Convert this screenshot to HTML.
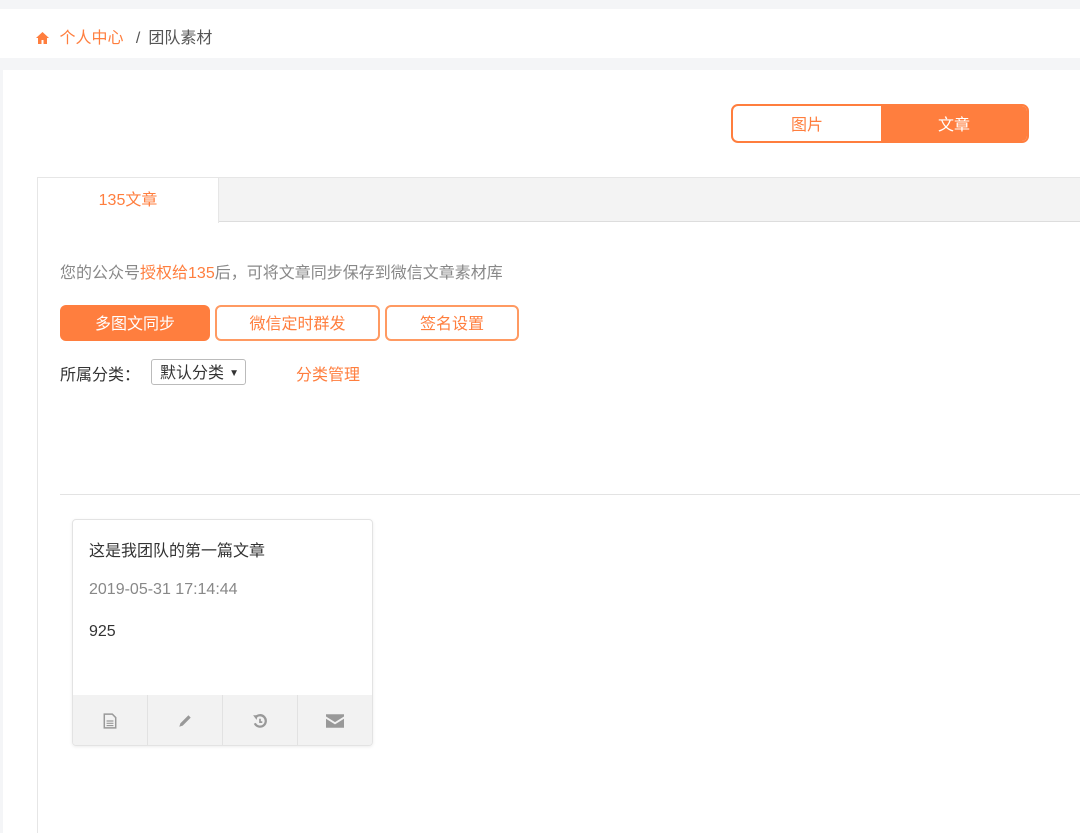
<!DOCTYPE html>
<html><head><meta charset="utf-8"><style>
*{margin:0;padding:0;box-sizing:border-box}
body{width:1080px;height:833px;background:#f4f5f7;font-family:"Liberation Sans","Noto Sans CJK SC",sans-serif;position:relative;overflow:hidden;font-size:16px;color:#333}
.a{position:absolute}
.or{color:#ff7e3e}
</style></head><body>
<div class="a" style="left:0;top:9px;width:1080px;height:49px;background:#fff"></div>
<div class="a" style="left:36px;top:30px;font-size:16px;color:#ff7e3e;line-height:18px">
<svg width="13" height="12" viewBox="0 0 13 12" style="vertical-align:-1px"><path d="M6.5 0L0 6h2v6h3.5V8h2v4H11V6h2z" fill="#ff7e3e"/></svg>
<span style="margin-left:6px">个人中心</span><span style="color:#555;margin:0 8px"> /</span><span style="color:#555">团队素材</span></div>
<div class="a" style="left:3px;top:70px;width:1077px;height:763px;background:#fff"></div>
<div class="a" style="left:731px;top:104px;width:298px;height:39px;border:2px solid #ff7e3e;border-radius:7px;overflow:hidden;display:flex;font-size:16px;line-height:40px;text-align:center">
<div style="width:148px;color:#ff7e3e">图片</div><div style="flex:1;background:#ff7e3e;color:#fff">文章</div></div>
<div class="a" style="left:37px;top:177px;width:1043px;height:45px;background:#f3f3f3;border-bottom:1px solid #ddd;border-top:1px solid #e6e6e6"></div>
<div class="a" style="left:37px;top:177px;width:182px;height:46px;background:#fff;border:1px solid #e6e6e6;border-bottom:none;color:#ff7e3e;font-size:16px;text-align:center;line-height:45px">135文章</div>
<div class="a" style="left:37px;top:222px;width:1px;height:611px;background:#e6e6e6"></div>
<div class="a" style="left:60px;top:259px;font-size:16px;color:#888">您的公众号<span class="or">授权给135</span>后，可将文章同步保存到微信文章素材库</div>
<div class="a" style="left:60px;top:305px;width:150px;height:36px;background:#ff7e3e;border-radius:6px;color:#fff;font-size:16px;text-align:center;line-height:39px">多图文同步</div>
<div class="a" style="left:215px;top:305px;width:165px;height:36px;border:2px solid #ff9a62;border-radius:6px;color:#ff7e3e;font-size:16px;text-align:center;line-height:36px">微信定时群发</div>
<div class="a" style="left:385px;top:305px;width:134px;height:36px;border:2px solid #ff9a62;border-radius:6px;color:#ff7e3e;font-size:16px;text-align:center;line-height:36px">签名设置</div>
<div class="a" style="left:60px;top:361px;font-size:16px;color:#333">所属分类：</div>
<div class="a" style="left:151px;top:359px;width:95px;height:26px;border:1px solid #bbb;border-radius:3px;font-size:16px;line-height:27px;padding-left:8px;color:#333">默认分类 <span style="font-size:10px;position:absolute;right:6px">▼</span></div>
<div class="a" style="left:296px;top:361px;font-size:16px;color:#ff7e3e">分类管理</div>
<div class="a" style="left:60px;top:494px;width:1020px;height:1px;background:#e3e3e3"></div>
<div class="a" style="left:72px;top:519px;width:301px;height:227px;border:1px solid #e3e3e3;border-radius:4px;box-shadow:0 1px 3px rgba(0,0,0,.08);overflow:hidden">
<div style="position:absolute;left:16px;top:17px;font-size:16px;color:#333">这是我团队的第一篇文章</div>
<div style="position:absolute;left:16px;top:61px;font-size:16px;color:#888">2019-05-31 17:14:44</div>
<div style="position:absolute;left:16px;top:103px;font-size:16px;color:#333">925</div>
<div style="position:absolute;left:0;top:175px;width:100%;height:52px;background:#f2f2f2;display:flex">
<div style="flex:1;border-right:1px solid #e2e2e2;display:flex;align-items:center;justify-content:center"><svg width="14" height="16" viewBox="0 0 12 14"><path d="M1 1h7l3 3v9H1z" fill="none" stroke="#999" stroke-width="1.3"/><path d="M3 7h6M3 9h6M3 11h6" stroke="#999"/></svg></div>
<div style="flex:1;border-right:1px solid #e2e2e2;display:flex;align-items:center;justify-content:center"><svg width="16" height="16" viewBox="0 0 14 14"><path d="M2 12l1-3 7-7 2 2-7 7z" fill="#999"/></svg></div>
<div style="flex:1;border-right:1px solid #e2e2e2;display:flex;align-items:center;justify-content:center"><svg width="16" height="16" viewBox="0 0 14 14"><path d="M3 4a5 5 0 1 1-.5 5" fill="none" stroke="#999" stroke-width="2"/><path d="M1 2l4 0-1 4z" fill="#999"/><path d="M7 5v3h2" fill="none" stroke="#999" stroke-width="1.5"/></svg></div>
<div style="flex:1;display:flex;align-items:center;justify-content:center"><svg width="18" height="14" viewBox="0 0 16 12"><path d="M0 0h16v2L8 7 0 2z M0 4l8 5 8-5v8H0z" fill="#999"/></svg></div>
</div></div>
</body></html>
